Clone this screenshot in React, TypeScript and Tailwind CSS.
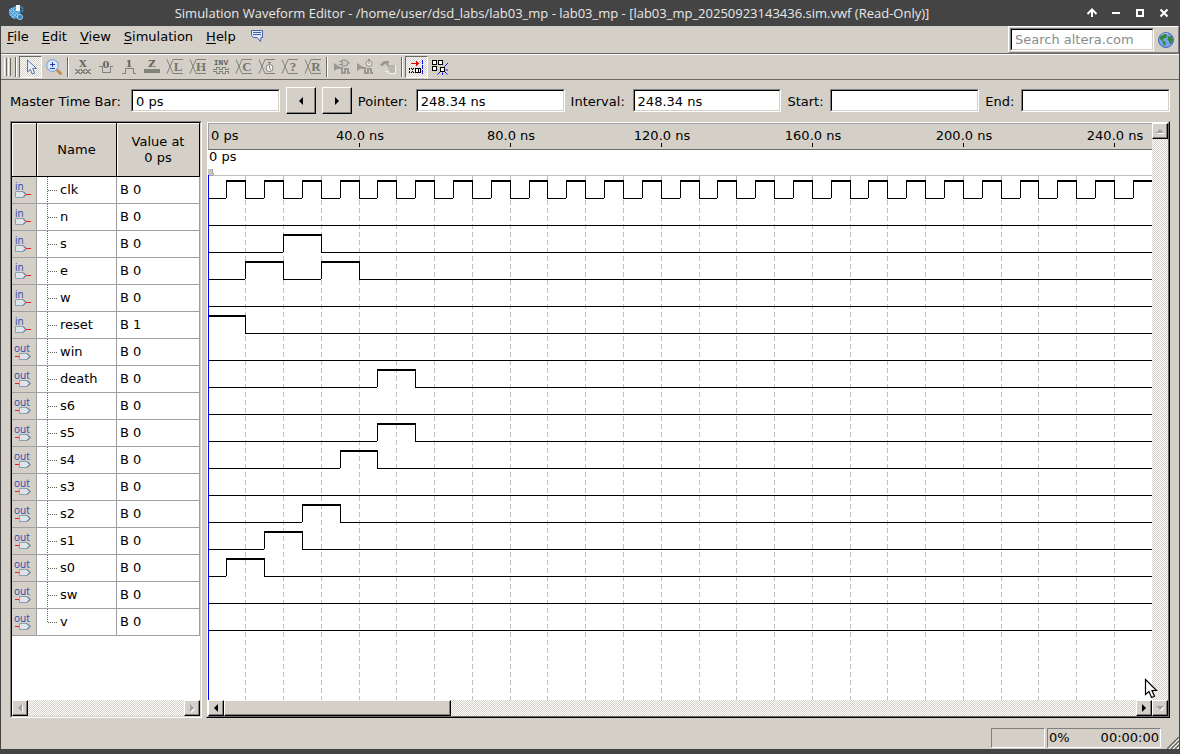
import type { ReactNode } from 'react';

const PX_PER_NS = 3.777;
const ROW = 27;
const END_NS = 500;

const at = (ns: number) => Math.floor(ns * PX_PER_NS);

type Signal = {
  name: string;
  dir: 'in' | 'out';
  value: string;
  high: [number, number][];
};

const clock: [number, number][] = Array.from({ length: END_NS / 10 }, (_, i) => [i * 10 + 5, i * 10 + 10]);

const signals: Signal[] = [
  { name: 'clk', dir: 'in', value: 'B 0', high: clock },
  { name: 'n', dir: 'in', value: 'B 0', high: [] },
  { name: 's', dir: 'in', value: 'B 0', high: [[20, 30]] },
  { name: 'e', dir: 'in', value: 'B 0', high: [[10, 20], [30, 40]] },
  { name: 'w', dir: 'in', value: 'B 0', high: [] },
  { name: 'reset', dir: 'in', value: 'B 1', high: [[0, 10]] },
  { name: 'win', dir: 'out', value: 'B 0', high: [] },
  { name: 'death', dir: 'out', value: 'B 0', high: [[45, 55]] },
  { name: 's6', dir: 'out', value: 'B 0', high: [] },
  { name: 's5', dir: 'out', value: 'B 0', high: [[45, 55]] },
  { name: 's4', dir: 'out', value: 'B 0', high: [[35, 45]] },
  { name: 's3', dir: 'out', value: 'B 0', high: [] },
  { name: 's2', dir: 'out', value: 'B 0', high: [[25, 35]] },
  { name: 's1', dir: 'out', value: 'B 0', high: [[15, 25]] },
  { name: 's0', dir: 'out', value: 'B 0', high: [[5, 15]] },
  { name: 'sw', dir: 'out', value: 'B 0', high: [] },
  { name: 'v', dir: 'out', value: 'B 0', high: [] },
];

const G = '#84827c';

function Icon({ children }: { children: ReactNode }) {
  return (
    <svg width="16" height="16" viewBox="0 0 16 16" fill="none" aria-hidden="true" className="shrink-0 overflow-visible">
      {children}
    </svg>
  );
}

function BusIcon({ letter }: { letter?: string }) {
  return (
    <Icon>
      <path d="M0 .5L6 14.5h10M0 14.5L6 .5h10" stroke={G} />
      {letter ? (
        <text x="11" y="12" fontSize="13" fontWeight="bold" textAnchor="middle" fill="#77756f" fontFamily="Liberation Serif, serif">
          {letter}
        </text>
      ) : (
        <>
          <circle cx="10.5" cy="9" r="3.5" fill="#f2f1ee" stroke={G} />
          <path d="M10.5 6.5v3l1.5 1M9 3.5h3M10.5 3v2" stroke={G} />
        </>
      )}
    </Icon>
  );
}

function ForceIcon({ letter, y = 8, path }: { letter: string; y?: number; path: string }) {
  return (
    <Icon>
      <path d={path} stroke={G} shapeRendering="crispEdges" />
      <text x="8" y={y} fontSize="10" fontWeight="bold" textAnchor="middle" fill="#65635e" fontFamily="DejaVu Serif, Liberation Serif, serif">
        {letter}
      </text>
    </Icon>
  );
}

function PointerIcon() {
  return (
    <Icon>
      <path d="M4.5 1v12l2.8-2.5 2 4.5 2.4-1-2-4.5h3.8z" fill="#e9f0fb" stroke="#5572a0" />
    </Icon>
  );
}

function ZoomIcon() {
  return (
    <Icon>
      <path d="M11 11l3.5 3.5" stroke="#c98a4a" strokeWidth="3" strokeLinecap="round" />
      <circle cx="6.5" cy="6.5" r="5.8" fill="#dceafc" stroke="#86a9e2" strokeWidth="1.2" />
      <path d="M4 5.5h5M6.5 3v5M4 9.5h5" stroke="#1f3fae" />
    </Icon>
  );
}

function RunIcon({ kind }: { kind: 'plug' | 'clock' }) {
  return (
    <Icon>
      <path d="M0 4l6 4-6 4z" fill="#9a9891" />
      <path d="M4 9h4v5h3v-4h3v4h2" stroke="#9a9891" strokeWidth="2" shapeRendering="crispEdges" />
      {kind === 'plug' ? (
        <>
          <path d="M8 1h3a3 3 0 0 1 0 6H8z" fill="#c9c7c1" stroke="#8f8d87" />
          <path d="M5 2.5h3M5 5.5h3M14 4h2" stroke="#8f8d87" />
        </>
      ) : (
        <>
          <circle cx="12" cy="4.5" r="3" fill="#e6e4df" stroke="#8f8d87" />
          <path d="M12 2.5v2.5M11 .5h2" stroke="#8f8d87" />
        </>
      )}
    </Icon>
  );
}

function ScriptIcon() {
  return (
    <Icon>
      <path d="M0 5.5L4 2h5v2.5H5.5L2 7.5z" fill="#9a9891" />
      <path d="M6 4l8 10" stroke="#9a9891" strokeWidth="2" />
      <path d="M9 6h6v8h-4l-3-5z" fill="#b9b7b0" />
      <path d="M5 12.5h3v2M10 14.5h5.5v-8" stroke="#f4f3f0" />
    </Icon>
  );
}

function SnapEdgeIcon() {
  return (
    <Icon>
      <g shapeRendering="crispEdges">
        <path d="M2 4.5h6" stroke="#f00000" />
        <path d="M7 2l3 2.5L7 7z" fill="#f00000" />
        <path d="M0 9.5h8M0 13.5h8M.5 10v4M3.5 10v4" stroke="#000" strokeDasharray="1 1" />
        <path d="M6.5 9.5h5v4h-5z" fill="#fff" stroke="#000" />
        <path d="M9.5 10v3" stroke="#000" />
        <path d="M13.5 1v14" stroke="#1818e8" strokeDasharray="4 1" />
      </g>
    </Icon>
  );
}

function SnapGridIcon() {
  return (
    <Icon>
      <path d="M.5 1.5h4v4h-4zM6.5 1.5h4v4h-4zM.5 7.5h4v4h-4zM8.5 8.5h4v4h-4z" stroke="#000" shapeRendering="crispEdges" fill="#fff" />
      <path d="M12.5 7.5L16 4M13.5 11H16M13 13l2.5 2.5M10.5 13.5V16M8 13l-2.5 2.5" stroke="#1818e8" />
    </Icon>
  );
}

function GlobeIcon() {
  return (
    <Icon>
      <circle cx="8" cy="8" r="7.5" fill="#7aa3ee" stroke="#4566b4" />
      <path d="M2 5c1-2 4-4 6.5-4l-.5 2 1.5 1L7 6.5 5.5 6 5 8.5 8 10l-1 4-2-2-.5-3L2 7.5z" fill="#358a3a" />
      <path d="M10 4.5l3.5-.5 1.5 3.5-1.5 4-1.5 1-1-3-1.5-2z" fill="#358a3a" />
      <path d="M3 3.5C5 1.5 8 1 10 1.5" stroke="#c4d8fa" strokeWidth=".8" />
    </Icon>
  );
}

function AppIcon() {
  return (
    <Icon>
      <path d="M1 4l7-3 5 6-2 7-7-1-3-5z" fill="#4a9bd4" />
      <path d="M1 5l9 8M3 3l9 9M1 9l6 5M1 8l6-6M2 11l8-8M4 13l7-7" stroke="#b6dcf4" strokeWidth=".7" />
      <path d="M8 0h4v6H8z" fill="#eef4f8" />
      <path d="M12 1l2.5 2v4" stroke="#3387c4" strokeWidth="1.5" />
      <circle cx="12" cy="12" r="2.5" fill="#2c7fc0" stroke="#a9d6f2" />
    </Icon>
  );
}

function PinIcon({ dir }: { dir: 'in' | 'out' }) {
  return (
    <svg width="24" height="26" viewBox="0 0 24 26" role="img" aria-label={dir + 'put pin'} className="block">
      <text x={dir === 'in' ? 3 : 2} y="13" fontSize="10" fill="#2a4bb0" fontFamily="Open Sans, sans-serif">{dir}</text>
      {dir === 'in' ? (
        <>
          <path d="M3.5 14.5H11l3 3-3 3H3.5z" fill="#dfe4e8" stroke="#8ea0b0" />
          <path d="M11 14.5l3 3-3 3" fill="none" stroke="#3d5f80" />
          <path d="M14 17.5h5" stroke="#e8202c" />
        </>
      ) : (
        <>
          <path d="M3 17.5h4" stroke="#e8202c" />
          <path d="M7.5 14.5H15l3 3-3 3H7.5z" fill="#dfe4e8" stroke="#8ea0b0" />
          <path d="M15 14.5l3 3-3 3" fill="none" stroke="#3d5f80" />
        </>
      )}
    </svg>
  );
}

function Tool({ label, pressed, children }: { label: string; pressed?: boolean; children: ReactNode }) {
  return (
    <button
      type="button"
      aria-label={label}
      aria-pressed={pressed}
      className={
        pressed
          ? 'flex h-[22px] w-[23px] shrink-0 items-center justify-center border border-t-[#6b6963] border-r-white border-b-white border-l-[#6b6963] bg-[repeating-conic-gradient(#d4d0c8_0_25%,#ffffff_0_50%)] bg-[length:2px_2px]'
          : 'flex h-[22px] w-[23px] shrink-0 items-center justify-center'
      }
    >
      {children}
    </button>
  );
}

function Divider() {
  return (
    <div className="flex w-[6px] shrink-0 justify-center">
      <div className="h-[20px] w-[2px] border-r border-l border-r-white border-l-[#6b6963]" />
    </div>
  );
}

function Field({ label, id, value, labelWidth }: { label: string; id: string; value: string; labelWidth: string }) {
  return (
    <>
      <label htmlFor={id} className={'shrink-0 pt-[2px] whitespace-nowrap ' + labelWidth}>{label}</label>
      <div className="min-w-0 flex-1 border border-t-[#808080] border-r-white border-b-white border-l-[#808080]">
        <input id={id} defaultValue={value} className="block h-[21px] w-full border border-t-black border-r-[#d4d0c8] border-b-[#d4d0c8] border-l-black bg-white px-[3px] pt-[2px] outline-none" />
      </div>
    </>
  );
}

const arrows = {
  left: 'M10 4v8L6 8z',
  right: 'M6 4v8l4-4z',
  up: 'M4 10h8L8 6z',
  down: 'M4 6h8l-4 4z',
};

function Arrow({ dir, disabled }: { dir: keyof typeof arrows; disabled?: boolean }) {
  return (
    <svg width="16" height="16" viewBox="0 0 16 16" aria-hidden="true" className="-m-[2px] shrink-0">
      {disabled && <path d={arrows[dir]} fill="#fff" transform="translate(1 1)" />}
      <path d={arrows[dir]} fill={disabled ? '#a0a0a4' : '#000'} />
    </svg>
  );
}

function ScrollButton({ dir, disabled }: { dir: keyof typeof arrows; disabled?: boolean }) {
  return (
    <button
      type="button"
      aria-label={'Scroll ' + dir}
      disabled={disabled}
      className="flex size-[16px] shrink-0 items-center justify-center border border-t-white border-r-black border-b-black border-l-white bg-[#d4d0c8] shadow-[inset_-1px_-1px_0_#808080]"
    >
      <Arrow dir={dir} disabled={disabled} />
    </button>
  );
}

const track = 'bg-[repeating-conic-gradient(#d4d0c8_0_25%,#ffffff_0_50%)] bg-[length:2px_2px]';

function StepButton({ dir, label }: { dir: 'left' | 'right'; label: string }) {
  return (
    <button
      type="button"
      aria-label={label}
      className="flex h-[27px] w-[30px] shrink-0 items-center justify-center border border-t-white border-r-black border-b-black border-l-white bg-[#d4d0c8] shadow-[inset_-1px_-1px_0_#808080]"
    >
      <Arrow dir={dir} />
    </button>
  );
}

function SignalTable() {
  const head = 'border-r border-b border-black bg-[#d4d0c8] p-0 text-center font-normal shadow-[inset_1px_1px_0_#fff]';
  const cell = 'border-r border-b border-[#a0a0a4] p-0';
  return (
    <table className="w-full table-fixed border-separate border-spacing-0">
      <colgroup>
        <col className="w-[25px]" />
        <col className="w-[80px]" />
        <col className="w-[83px]" />
      </colgroup>
      <thead>
        <tr className="h-[54px]">
          <th className={head} aria-label="Pin type" />
          <th className={head}>Name</th>
          <th className={head + ' leading-4'}>Value at<br />0 ps</th>
        </tr>
      </thead>
      <tbody>
        {signals.map((s, i) => (
          <tr key={s.name} className="h-[27px]">
            <td className={cell + ' bg-[#d4d0c8]'}>
              <PinIcon dir={s.dir} />
            </td>
            <td className={cell}>
              <div className="flex items-center">
                <svg width="21" height="26" aria-hidden="true" className="shrink-0" shapeRendering="crispEdges">
                  <path d={i === signals.length - 1 ? 'M10.5 0v13' : 'M10.5 0v26'} stroke="#606060" strokeDasharray="1 1" />
                  <path d="M11 13.5h9" stroke="#606060" strokeDasharray="1 1" />
                </svg>
                <span className="pl-[2px]">{s.name}</span>
              </div>
            </td>
            <td className={cell + ' pl-[3px]'}>{s.value}</td>
          </tr>
        ))}
      </tbody>
    </table>
  );
}

function Ruler() {
  const marks = [40, 80, 120, 160, 200, 240];
  return (
    <div className="h-[27px] shrink-0 overflow-hidden border-t border-b border-l border-t-[#a0a0a4] border-b-[#6b6963] border-l-[#a0a0a4]">
      <svg width="100%" height="25" className="block" role="img" aria-label="Time scale">
        <text x="2" y="16">0 ps</text>
        <path d="M-.5 19v4" stroke="#000" />
        {marks.map((ns) => (
          <g key={ns}>
            <text x={at(ns)} y="16" textAnchor="middle">{ns.toFixed(1) + ' ns'}</text>
            <path d={'M' + (at(ns) - 0.5) + ' 19v4'} stroke="#000" />
          </g>
        ))}
      </svg>
    </div>
  );
}

function Waves() {
  const grid = Array.from({ length: END_NS / 10 - 1 }, (_, i) => at((i + 1) * 10) + 0.5);
  return (
    <svg width="100%" height="100%" className="absolute inset-0" shapeRendering="crispEdges" role="img" aria-label="Signal waveforms">
      <text x="1" y="11">0 ps</text>
      <path d="M0 19h4v4h1v3H0z" fill="#c9c5bd" />
      <path d="M4.5 19v4M0 25.5h5.5v-3" stroke="#a0a0a4" fill="none" />
      <line x1="5" x2="100%" y1="25.5" y2="25.5" stroke="#c0c0c0" />
      {grid.map((x) => (
        <line key={x} x1={x} x2={x} y1="26" y2="100%" stroke="#c0c0c0" strokeDasharray="5 3" />
      ))}
      {signals.map((s, i) => {
        const low = 48 + i * ROW;
        let x = 0;
        const lows: string[] = [];
        s.high.forEach(([a, b]) => {
          if (at(a) > x) lows.push('M' + x + ' ' + (low + 0.5) + 'H' + at(a));
          x = at(b);
        });
        lows.push('M' + x + ' ' + (low + 0.5) + 'H4000');
        return (
          <g key={s.name} fill="none" stroke="#000">
            <path d={lows.join('')} />
            {s.high.map(([a, b]) => (
              <g key={a}>
                <path d={'M' + at(a) + ' ' + (low - 17) + 'H' + (at(b) + 1)} strokeWidth="2" />
                <path d={'M' + (at(a) + 0.5) + ' ' + (low - 17) + 'V' + low + 'M' + (at(b) + 0.5) + ' ' + (low - 17) + 'V' + (low + 1)} />
              </g>
            ))}
          </g>
        );
      })}
      <path d="M.5 25V4000" stroke="#0000ff" />
    </svg>
  );
}

function TitleBar() {
  return (
    <header className="flex h-[26px] shrink-0 items-center bg-[#444444] pr-[4px] pl-[8px] text-[#e8e8e8]">
      <AppIcon />
      <h1 className="min-w-0 flex-1 truncate text-center font-['Open_Sans',sans-serif] text-[13px] font-normal">
        Simulation Waveform Editor - /home/user/dsd_labs/lab03_mp - lab03_mp - [lab03_mp_20250923143436.sim.vwf (Read-Only)]
      </h1>
      {[
        ['Shade', 'M3.5 9L8 4.5 12.5 9M8 5v7'],
        ['Minimize', 'M4 8h8'],
        ['Maximize', 'M5 5h6v6H5z'],
        ['Close', 'M4.5 4.5l7 7M11.5 4.5l-7 7'],
      ].map(([label, d]) => (
        <button key={label} type="button" aria-label={label} className="flex w-[24px] shrink-0 justify-center">
          <svg width="16" height="16" viewBox="0 0 16 16" fill="none" stroke="#fff" strokeWidth="2" aria-hidden="true">
            <path d={d} />
          </svg>
        </button>
      ))}
    </header>
  );
}

function MenuBar() {
  return (
    <div className="flex h-[28px] shrink-0 items-start justify-between border-b border-[#6b6963]">
      <nav className="flex items-center gap-[13px] pt-[3px] pl-[6px]">
        {['File', 'Edit', 'View', 'Simulation', 'Help'].map((m) => (
          <button key={m} type="button" className="leading-4">
            <span className="underline underline-offset-2">{m[0]}</span>
            {m.slice(1)}
          </button>
        ))}
        <button type="button" aria-label="Feedback">
          <Icon>
            <path d="M2.5 1.5h11v7H12l-.5 4-3.5-4H4.5l-2-2z" fill="#dfeafc" stroke="#4a64a8" />
            <path d="M4 3.5h8M4 5.5h8" stroke="#4a64a8" />
          </Icon>
        </button>
      </nav>
      <div className="flex h-[27px] items-center gap-[4px] border border-t-white border-r-[#808080] border-b-[#808080] border-l-white pr-[4px] pl-[1px]">
        <div className="w-[144px] border border-t-[#808080] border-r-white border-b-white border-l-[#808080]">
          <input aria-label="Search altera.com" placeholder="Search altera.com" className="block h-[21px] w-full border border-t-black border-r-[#d4d0c8] border-b-[#d4d0c8] border-l-black bg-white px-[3px] outline-none placeholder:text-[#8c8c8c]" />
        </div>
        <button type="button" aria-label="Search">
          <GlobeIcon />
        </button>
      </div>
    </div>
  );
}

function ToolBar() {
  return (
    <div className="flex h-[26px] shrink-0 items-center border-t border-b border-t-white border-b-[#6b6963] pl-[3px]">
      <div className="flex w-[9px] gap-[1px]">
        <div className="h-[18px] w-[3px] border-r border-l border-r-[#6b6963] border-l-white" />
        <div className="h-[18px] w-[3px] border-r border-l border-r-[#6b6963] border-l-white" />
      </div>
      <Divider />
      <Tool label="Selection tool" pressed><PointerIcon /></Tool>
      <Tool label="Zoom tool"><ZoomIcon /></Tool>
      <Divider />
      <Tool label="Forcing unknown"><ForceIcon letter="X" path="M0 14.5h1l4-4h1l4 4h1l4-4h1M0 10.5h1l4 4h1l4-4h1l4 4h1" /></Tool>
      <Tool label="Forcing low"><ForceIcon letter="0" y={9} path="M1 7.5h3v6h8v-6h3" /></Tool>
      <Tool label="Forcing high"><ForceIcon letter="1" path="M1 14.5h3v-5h8v5h3" /></Tool>
      <Tool label="High impedance"><ForceIcon letter="Z" path="M0 10.5h16M0 11.5h16M0 12.5h16M0 13.5h16" /></Tool>
      <Tool label="Weak low"><BusIcon letter="L" /></Tool>
      <Tool label="Weak high"><BusIcon letter="H" /></Tool>
      <Tool label="Invert">
        <Icon>
          <text x="8" y="6" fontSize="8" fontWeight="bold" textAnchor="middle" fill="#65635e" fontFamily="Liberation Mono, monospace">INV</text>
          <path d="M0 10.5h3v-2h3v2h3v-2h3v2h3v-2M0 12.5h3v2h3v-2h3v2h3v-2h3v2" stroke={G} shapeRendering="crispEdges" />
        </Icon>
      </Tool>
      <Tool label="Count value"><BusIcon letter="C" /></Tool>
      <Tool label="Overwrite clock"><BusIcon /></Tool>
      <Tool label="Arbitrary value"><BusIcon letter="?" /></Tool>
      <Tool label="Random value"><BusIcon letter="R" /></Tool>
      <Divider />
      <Tool label="Run functional simulation"><RunIcon kind="plug" /></Tool>
      <Tool label="Run timing simulation"><RunIcon kind="clock" /></Tool>
      <Tool label="Generate testbench"><ScriptIcon /></Tool>
      <Divider />
      <Tool label="Snap to transition" pressed><SnapEdgeIcon /></Tool>
      <Tool label="Snap to grid"><SnapGridIcon /></Tool>
    </div>
  );
}

export default function App() {
  return (
    <div className="flex h-screen flex-col overflow-hidden bg-[#d4d0c8] font-['DejaVu_Sans',sans-serif] text-[13px] leading-4 text-black">
      <TitleBar />
      <div className="flex min-h-0 flex-1 flex-col border-r border-l border-[#444444]">
        <MenuBar />
        <ToolBar />

        <section className="flex h-[41px] shrink-0 items-center gap-[6px] px-[9px]" aria-label="Time controls">
          <Field label="Master Time Bar:" id="master" value="0 ps" labelWidth="w-[115px]" />
          <StepButton dir="left" label="Previous transition" />
          <StepButton dir="right" label="Next transition" />
          <Field label="Pointer:" id="pointer" value="248.34 ns" labelWidth="w-[52px]" />
          <Field label="Interval:" id="interval" value="248.34 ns" labelWidth="w-[56px]" />
          <Field label="Start:" id="start" value="" labelWidth="w-[37px]" />
          <Field label="End:" id="end" value="" labelWidth="w-[30px]" />
        </section>

        <main className="flex min-h-0 flex-1 gap-[4px] px-[9px]">
          <section aria-label="Signals" className="w-[192px] shrink-0 border border-t-[#808080] border-r-white border-b-white border-l-[#808080]">
            <div className="flex h-full flex-col border border-t-black border-r-[#d4d0c8] border-b-[#d4d0c8] border-l-black bg-white">
              <div className="min-h-0 flex-1 overflow-hidden">
                <SignalTable />
              </div>
              <div className={'flex h-[16px] shrink-0 justify-between ' + track}>
                <ScrollButton dir="left" disabled />
                <ScrollButton dir="right" disabled />
              </div>
            </div>
          </section>

          <section aria-label="Waveforms" className="min-w-0 flex-1 border border-t-[#d4d0c8] border-r-black border-b-black border-l-[#d4d0c8]">
            <div className="flex h-full border border-t-white border-r-[#6b6963] border-b-[#6b6963] border-l-white">
              <div className="flex min-w-0 flex-1 flex-col">
                <Ruler />
                <div className="relative min-h-0 flex-1 overflow-hidden bg-white">
                  <Waves />
                </div>
                <div className={'flex h-[16px] shrink-0 ' + track}>
                  <ScrollButton dir="left" />
                  <div className="w-[24%] border border-t-white border-r-black border-b-black border-l-white bg-[#d4d0c8] shadow-[inset_-1px_-1px_0_#808080]" />
                  <div className="flex-1" />
                  <ScrollButton dir="right" />
                </div>
              </div>
              <div className={'relative flex w-[16px] shrink-0 flex-col justify-between ' + track}>
                <ScrollButton dir="up" disabled />
                <ScrollButton dir="down" disabled />
                <svg width="14" height="22" viewBox="0 0 14 22" className="absolute bottom-[16px] -left-[8px]" aria-hidden="true">
                  <path d="M1.5 1.5v15l3.5-3 2.5 6 3-1.3-2.5-5.7h4.5z" fill="#fff" stroke="#000" strokeWidth="1.2" />
                </svg>
              </div>
            </div>
          </section>
        </main>

        <footer className="flex h-[31px] shrink-0 items-end justify-end">
          <div className="mb-[1px] h-[20px] w-[54px] border border-t-[#808080] border-r-white border-b-white border-l-[#808080]" />
          <div className="mb-[1px] ml-[2px] flex h-[20px] w-[114px] items-center justify-between border border-t-[#808080] border-r-white border-b-white border-l-[#808080] px-[1px]">
            <span>0%</span>
            <span>00:00:00</span>
          </div>
          <svg width="12" height="12" viewBox="0 0 12 12" className="ml-[6px]" aria-hidden="true">
            <path d="M0 12L12 0M4 12l8-8M8 12l4-4" stroke="#6b6963" strokeWidth="1.5" />
            <path d="M2 12L12 2M6 12l6-6M10 12l2-2" stroke="#fff" />
          </svg>
        </footer>
      </div>
      <div className="h-[5px] shrink-0 bg-[#444444]" />
    </div>
  );
}
